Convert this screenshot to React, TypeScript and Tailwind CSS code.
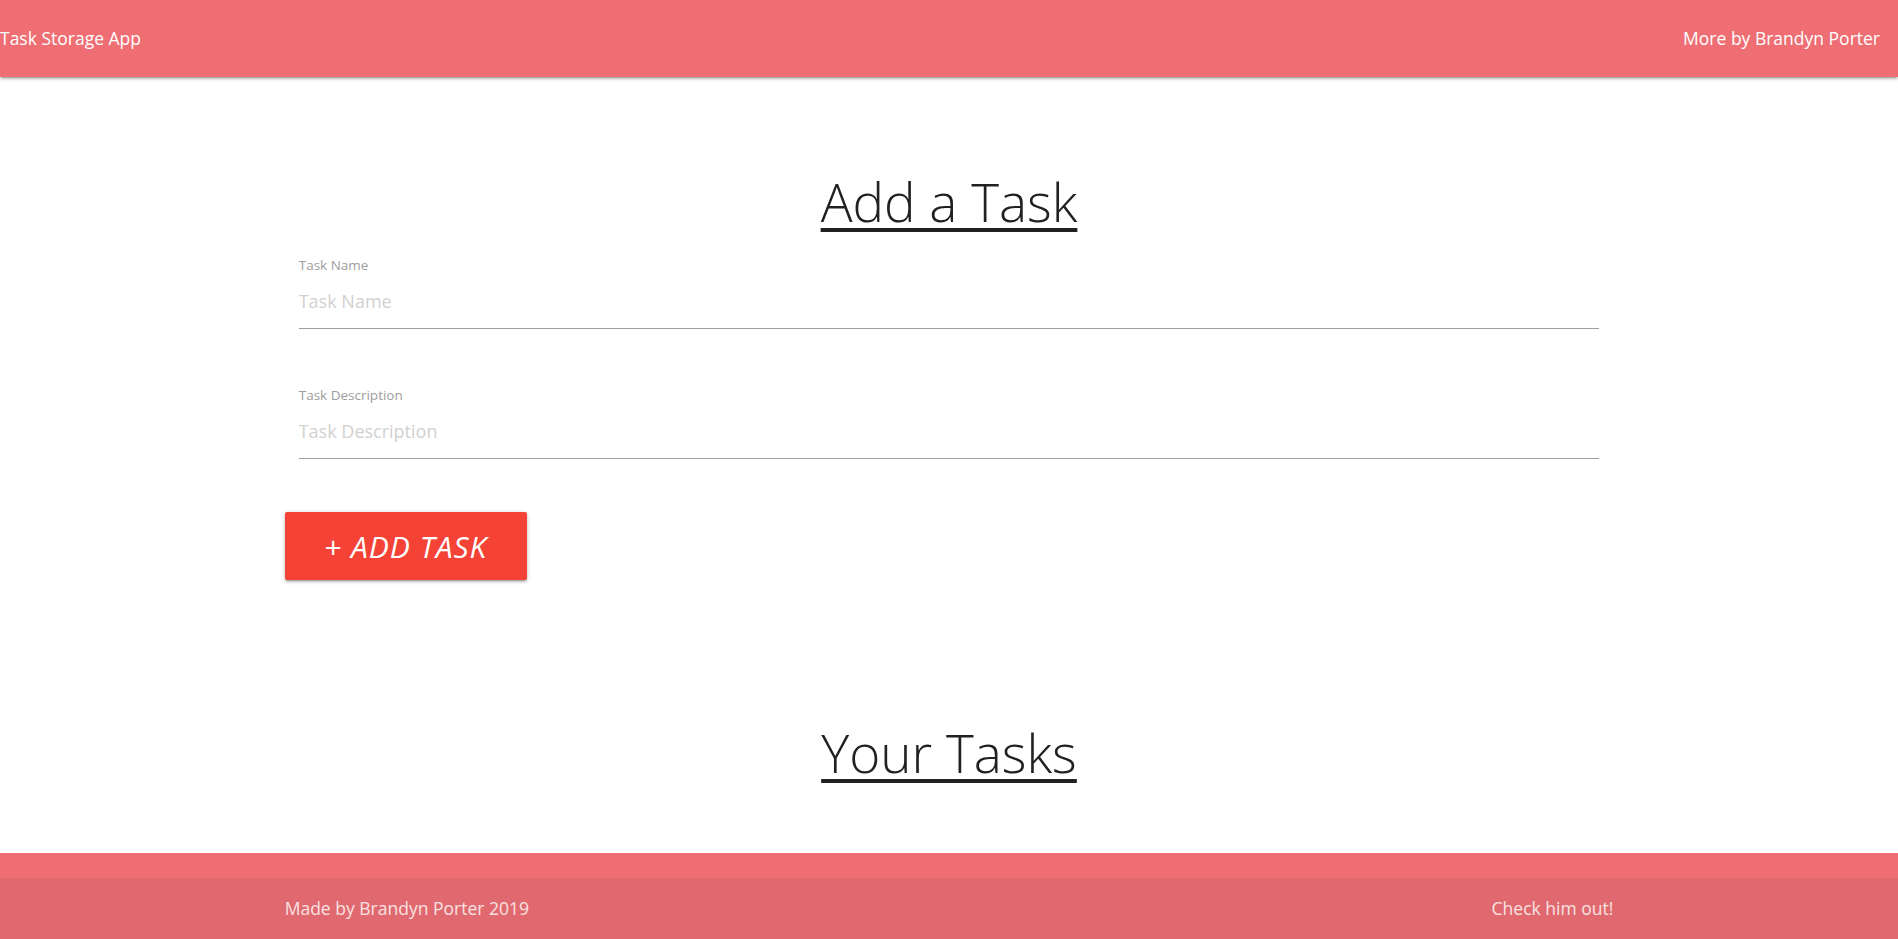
import React from 'react';

const font = { fontFamily: '"Open Sans", "Noto Sans", sans-serif' };

function Field({ label }: { label: string }) {
  return (
    <div className="mx-[14px]">
      <div className="text-[13.5px] leading-[16px] text-[#9e9e9e]">{label}</div>
      <input
        type="text"
        placeholder={label}
        className="mt-[5px] h-[51px] w-full pb-[4px] border-b border-[#9e9e9e] bg-transparent text-[18px] text-[#212121] outline-none placeholder:text-[#d1d1d1]"
      />
    </div>
  );
}

export default function App() {
  return (
    <div className="min-h-screen bg-white flex flex-col" style={font}>
      <nav className="h-[77px] bg-[#ee6e73] flex items-center justify-between pr-[18px] text-[17.5px] text-white shadow-[0_2px_2px_0_rgba(0,0,0,0.14),0_3px_1px_-2px_rgba(0,0,0,0.12),0_1px_5px_0_rgba(0,0,0,0.2)] relative z-10">
        <span>Task Storage App</span>
        <span>More by Brandyn Porter</span>
      </nav>

      <main className="w-[70%] mx-auto">
        <h3 className="mt-[94px] text-center text-[53px] leading-[61px] font-[350] text-[#212121]">
          <span className="underline decoration-[4px] underline-offset-[6px]">Add a Task</span>
        </h3>

        <div className="mt-[25px]">
          <Field label="Task Name" />
        </div>
        <div className="mt-[58px]">
          <Field label="Task Description" />
        </div>

        <button className="mt-[53px] h-[68px] w-[242px] rounded-[2px] bg-[#f44336] text-white text-[30px] italic tracking-[1px] shadow-[0_2px_2px_0_rgba(0,0,0,0.14),0_3px_1px_-2px_rgba(0,0,0,0.12),0_1px_5px_0_rgba(0,0,0,0.2)]">
          + ADD TASK
        </button>

        <h3 className="mt-[142px] text-center text-[53px] leading-[61px] font-[350] text-[#212121]">
          <span className="underline decoration-[4px] underline-offset-[6px]">Your Tasks</span>
        </h3>
      </main>

      <footer className="mt-auto bg-[#ee6e73]">
        <div className="h-[25px]" />
        <div className="h-[61px] bg-[#df696e]">
          <div className="w-[70%] mx-auto h-full flex items-center justify-between text-[17.5px] text-white/80">
            <span>Made by Brandyn Porter 2019</span>
            <span>Check him out!</span>
          </div>
        </div>
      </footer>
    </div>
  );
}
